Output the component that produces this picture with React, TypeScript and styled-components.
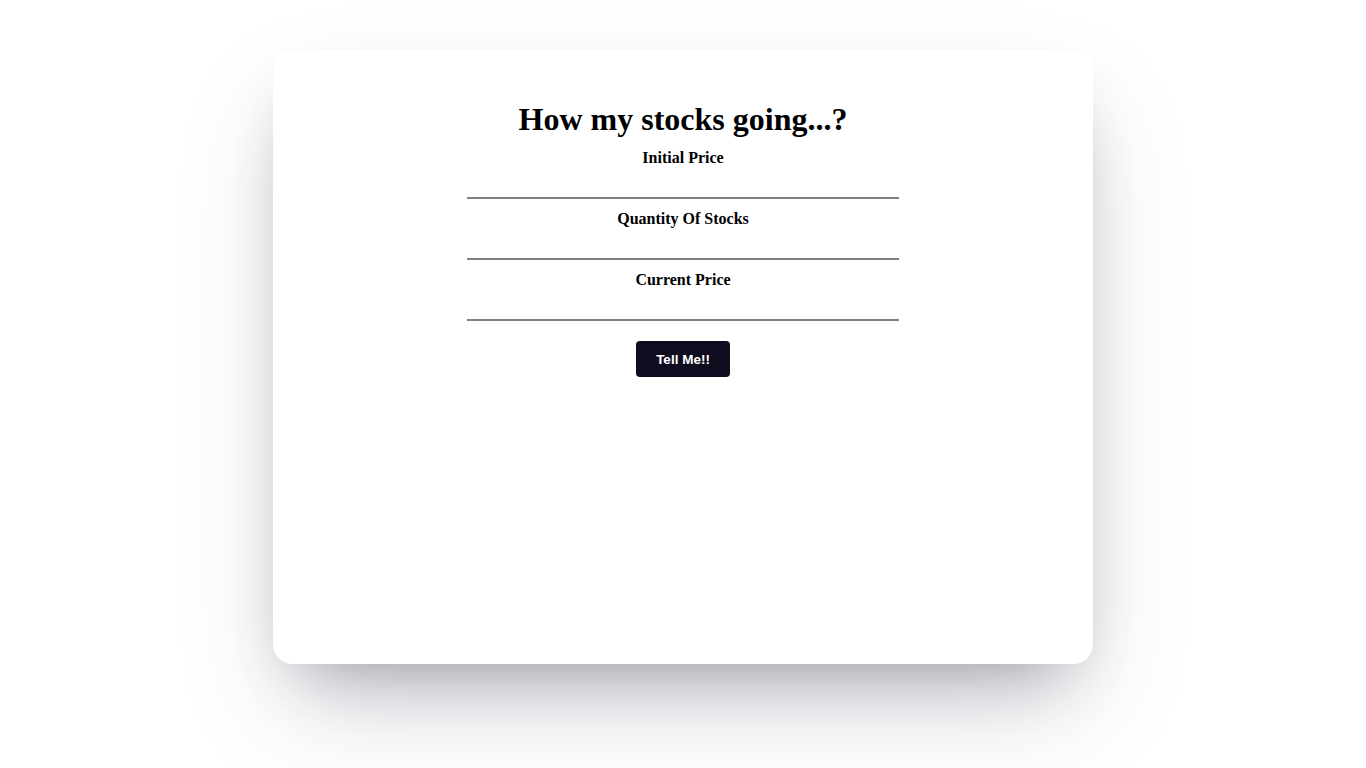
import styled, {createGlobalStyle} from "styled-components";

const GlobalStyle = createGlobalStyle`
    html, body {
        margin: 0;
        padding: 0;
        background-color: #ffffff;
    }
    body {
        font-family: "Liberation Serif", "Times New Roman", serif;
    }
`;

const Page = styled.div`
    width: 100%;
    height: 768px;
    overflow: hidden;
    padding-top: 50px;
    box-sizing: border-box;
`;

const Card = styled.div`
    width: 820px;
    height: 614px;
    margin: 0 auto;
    background-color: #ffffff;
    border-radius: 20px;
    box-shadow: 0 50px 100px -20px rgba(50, 50, 93, 0.25),
        0 30px 60px -30px rgba(0, 0, 0, 0.3);

    display: flex;
    flex-direction: column;
    align-items: center;
    padding-top: 51px;
    box-sizing: border-box;
`;

const Title = styled.h1`
    margin: 0 0 11px 0;
    font-size: 32px;
    font-weight: 700;
    color: #000;
    line-height: 37px;
`;

const Field = styled.div`
    display: flex;
    flex-direction: column;
    align-items: center;
    margin-bottom: 11px;
`;

const Label = styled.label`
    font-size: 16px;
    font-weight: 700;
    line-height: 18px;
    color: #000;
`;

const Input = styled.input`
    width: 432px;
    height: 32px;
    box-sizing: border-box;
    border: none;
    border-bottom: 2px solid #808080;
    outline: none;
    background: transparent;
    font-size: 16px;
    text-align: center;
`;

const Button = styled.button`
    margin-top: 9px;
    width: 94px;
    height: 36px;
    border: none;
    border-radius: 4px;
    background-color: #0f0c1f;
    color: #ffffff;
    font-family: "Liberation Sans", Arial, sans-serif;
    font-size: 13.5px;
    font-weight: 700;
    padding: 0;
    cursor: pointer;
`;

const fields = [
    {id: "initial", label: "Initial Price"},
    {id: "quantity", label: "Quantity Of Stocks"},
    {id: "current", label: "Current Price"},
];

export default function App() {
    return (
        <>
            <GlobalStyle/>
            <Page>
                <Card>
                    <Title>How my stocks going...?</Title>
                    {fields.map(f => (
                        <Field key={f.id}>
                            <Label htmlFor={f.id}>{f.label}</Label>
                            <Input id={f.id} type="number"/>
                        </Field>
                    ))}
                    <Button>Tell Me!!</Button>
                </Card>
            </Page>
        </>
    );
}
